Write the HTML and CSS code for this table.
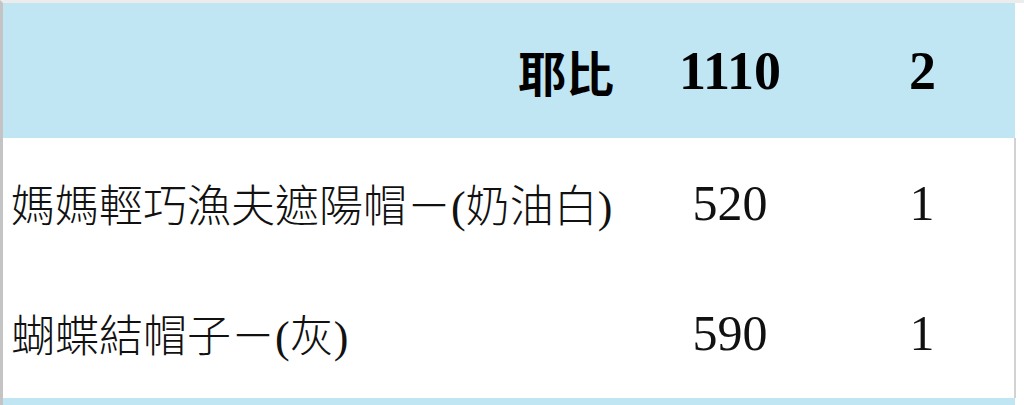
FILE: index.html
```html
<!DOCTYPE html>
<html lang="zh-Hant">
<head>
<meta charset="utf-8">
<title>訂單明細</title>
<link rel="stylesheet" href="styles.css">
</head>
<body>
<div class="sheet">
  <table class="orders">
    <colgroup>
      <col class="c-name">
      <col class="c-price">
      <col class="c-qty">
    </colgroup>
    <tbody>
      <tr class="group">
        <td class="name">耶比</td>
        <td class="num">1110</td>
        <td class="num last">2</td>
      </tr>
      <tr class="item">
        <td class="name">媽媽輕巧漁夫遮陽帽－(奶油白)</td>
        <td class="num">520</td>
        <td class="num last">1</td>
      </tr>
      <tr class="item">
        <td class="name">蝴蝶結帽子－(灰)</td>
        <td class="num">590</td>
        <td class="num last">1</td>
      </tr>
      <tr class="group next">
        <td class="name"></td>
        <td class="num"></td>
        <td class="num last"></td>
      </tr>
    </tbody>
  </table>
</div>
</body>
</html>
```

FILE: styles.css
```css
html, body {
  margin: 0;
  padding: 0;
  background: #ffffff;
  overflow: hidden;
}

.sheet {
  height: 405px;
  border-left: 3px solid #c4c4c4;
  border-top: 3px solid #ececec;
  box-sizing: border-box;
  font-family: "Liberation Serif", "Noto Sans CJK TC", serif;
  color: #111;
}

.orders {
  width: 1012px;
  border-collapse: collapse;
  table-layout: fixed;
}

.c-name { width: 627px; }
.c-price { width: 200px; }
.c-qty { width: 185px; }

.orders td {
  padding: 0;
  vertical-align: middle;
  white-space: nowrap;
}

.group td {
  background: #c0e6f4;
  height: 135px;
  font-weight: 700;
  color: #000;
}

.item td {
  height: 130px;
  background: #ffffff;
  font-weight: 300;
}

.item td.last {
  border-right: 2px solid #d2d2d2;
}

.group.next td {
  height: 10px;
}

.name {
  font-size: 44px;
  padding-left: 8px !important;
}

.group .name {
  font-size: 48px;
  text-align: right;
  padding-right: 16px !important;
}

.num {
  text-align: center;
  font-size: 50px;
}

.group .num {
  font-size: 54px;
}
```
